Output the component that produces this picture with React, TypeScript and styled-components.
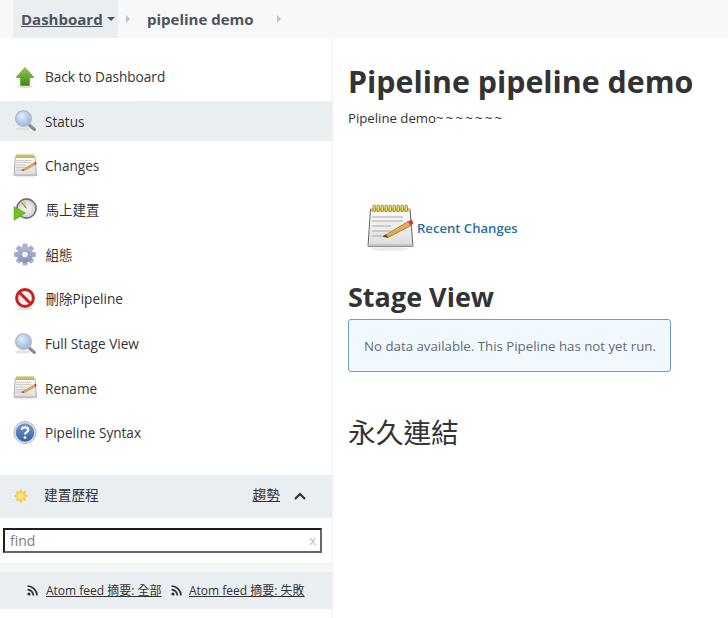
import React, { useId } from "react";
import styled, { createGlobalStyle } from "styled-components";

const Global = createGlobalStyle`
  html, body { margin: 0; padding: 0; height: 100%; overflow: hidden; background: #fff; }
  body { font-family: "Open Sans", "Noto Sans CJK TC", sans-serif; color: #333; }
  #root { height: 100%; }
`;

const Page = styled.div`
  display: flex;
  flex-direction: column;
  height: 618px;
`;
const Breadcrumbs = styled.nav`
  display: flex;
  align-items: center;
  height: 38px;
  flex: none;
  padding-left: 13px;
  background: #f8f8f8;
  font-size: 15px;
  font-weight: 700;
  color: #4d545d;
`;
const CrumbActive = styled.div`
  display: flex;
  align-items: center;
  width: 105px;
  height: 38px;
  padding-left: 8px;
  box-sizing: border-box;
  background: #e9eef1;
`;
const CrumbLink = styled.a`
  color: #4d545d;
  text-decoration: underline;
`;
const Caret = styled.span`
  width: 0;
  height: 0;
  margin-left: 4px;
  margin-bottom: 1px;
  border-left: 4.5px solid transparent;
  border-right: 4.5px solid transparent;
  border-top: 4.5px solid #4d545d;
`;
const Chevron = styled.span<{ $gap: number }>`
  width: 0;
  height: 0;
  margin-left: ${(p) => p.$gap}px;
  border-top: 4px solid transparent;
  border-bottom: 4px solid transparent;
  border-left: 4px solid #c4c4c4;
`;
const CrumbText = styled.span`
  margin-left: 17px;
`;
const Body = styled.div`
  display: flex;
  flex: 1;
  min-height: 0;
`;
const Side = styled.aside`
  flex: none;
  box-sizing: border-box;
  border-right: 1px solid #f0f0f0;
  padding-top: 18.7px;
  width: 333px;
`;
const TaskList = styled.div`
  display: flex;
  flex-direction: column;
  gap: 4.5px;
`;
const Task = styled.a<{ $active?: boolean }>`
  display: flex;
  align-items: center;
  height: 40px;
  padding-left: 13px;
  font-size: 13.6px;
  font-weight: 500;
  color: #333;
  background: ${(p) => (p.$active ? "#e9eef1" : "transparent")};
`;
const TaskIcon = styled.span`
  display: flex;
  width: 24px;
  height: 24px;
  margin-right: 8px;
  flex: none;
`;
const Cjk = styled.span`
  display: inline-block;
  font-size: 13.5px;
  font-weight: 400;
  margin-left: 0.5px;
  padding-bottom: 2px;
`;
const HistoryHead = styled.div`
  display: flex;
  align-items: center;
  height: 43px;
  margin-top: 22.3px;
  padding-left: 13px;
  background: #e9eef1;
  font-size: 13.7px;
`;
const HistoryTitle = styled.span`
  margin-left: 15px;
  padding-bottom: 5px;
  flex: 1;
  color: #333;
`;
const Trend = styled.a`
  color: #333;
  text-decoration: underline;
  padding-bottom: 5px;
  margin-right: 14px;
`;
const Collapse = styled.span`
  display: flex;
  margin-right: 26px;
`;
const SearchWrap = styled.div`
  position: relative;
  padding: 10px 10px 10px 3px;
`;
const Search = styled.input`
  display: block;
  width: 319px;
  height: 25px;
  box-sizing: border-box;
  padding: 0 20px 0 5px;
  border: 2px solid;
  border-color: #1f1f1f #666 #666 #1f1f1f;
  font: 14px "Open Sans", sans-serif;
  color: #888;
  outline: none;
  &::placeholder { color: #7a7f85; opacity: 1; }
`;
const Clear = styled.span`
  position: absolute;
  right: 16px;
  top: 13px;
  font-size: 13px;
  color: #bbb;
`;
const FeedGap = styled.div`
  height: 8px;
  background: #f7f7f7;
  border-top: 1px solid #eee;
`;
const FeedBar = styled.div`
  display: flex;
  align-items: center;
  justify-content: center;
  height: 37px;
  background: #e9eef1;
  font-size: 12px;
  gap: 9px;
`;
const Feed = styled.a`
  display: flex;
  align-items: center;
  color: #333;
  span { text-decoration: underline; margin-left: 7.5px; }
`;
const Main = styled.main`
  flex: 1;
  padding-left: 15px;
  min-width: 0;
`;
const Title = styled.h1`
  margin: 24px 0 0;
  font-size: 30.35px;
  line-height: 40px;
  font-weight: 700;
  color: #333;
  white-space: nowrap;
`;
const Desc = styled.p`
  margin: 7px 0 0;
  font-size: 13.2px;
  line-height: 18px;
  color: #333;
`;
const Tildes = styled.span`
  letter-spacing: 2.2px;
`;
const Recent = styled.div`
  display: flex;
  align-items: center;
  margin: 77px 0 0 18px;
  height: 48px;
`;
const RecentLink = styled.a`
  margin-left: 3px;
  font-size: 13.1px;
  font-weight: 600;
  color: #2a6da5;
`;
const H2 = styled.h2`
  margin: 28px 0 0;
  font-size: 27px;
  line-height: 34px;
  font-weight: 700;
  color: #333;
`;
const Alert = styled.div`
  display: flex;
  align-items: center;
  box-sizing: border-box;
  width: 323px;
  height: 53px;
  margin-top: 5px;
  padding-left: 15px;
  border: 1px solid #6e9ccf;
  border-radius: 3px;
  background: #f1f9ff;
  font-size: 13.27px;
  color: #5f6b73;
  white-space: nowrap;
`;
const Permalinks = styled.h2`
  margin: 40px 0 0;
  font-size: 27.7px;
  line-height: 38px;
  font-weight: 400;
  color: #333;
  font-family: "Noto Sans CJK TC", sans-serif;
`;

const Up = () => {
  const id = useId();
  return (
    <svg width="24" height="24" viewBox="0 0 24 24">
      <defs>
        <linearGradient id={id} x1="0" y1="0" x2="0" y2="1">
          <stop offset="0" stopColor="#8fcb4a" />
          <stop offset="1" stopColor="#3f8a12" />
        </linearGradient>
      </defs>
      <ellipse cx="12" cy="21.5" rx="8" ry="1.5" fill="#ddd" />
      <path d="M12 2.5 21 12.5H16.5V20.5H7.5V12.5H3Z" fill={`url(#${id})`} stroke="#4e9a1a" strokeWidth=".6" />
    </svg>
  );
};
const Lens = () => {
  const id = useId();
  return (
    <svg width="24" height="24" viewBox="0 0 24 24">
      <defs>
        <radialGradient id={id} cx=".4" cy=".35" r=".7">
          <stop offset="0" stopColor="#e4effa" />
          <stop offset="1" stopColor="#8db4e2" />
        </radialGradient>
      </defs>
      <ellipse cx="10" cy="20" rx="8" ry="1.6" fill="#e2e2e2" />
      <path d="M15 15 21.5 20.5" stroke="#8a8a8a" strokeWidth="3" strokeLinecap="round" />
      <circle cx="10.5" cy="9.5" r="7.8" fill={`url(#${id})`} stroke="#b4bcc6" strokeWidth="1.6" />
    </svg>
  );
};
const Notepad = ({ size = 24 }: { size?: number }) => {
  const id = useId();
  return (
    <svg width={size} height={size} viewBox="0 0 48 48">
      <defs>
        <linearGradient id={id} x1="0" y1="0" x2="0" y2="1">
          <stop offset="0" stopColor="#fdfdfd" />
          <stop offset="1" stopColor="#dcdcdc" />
        </linearGradient>
      </defs>
      <ellipse cx="24" cy="45" rx="19" ry="2" fill="#ececec" />
      <path d="M4.5 5H44L47 42.5H2Z" fill={`url(#${id})`} stroke="#666" strokeWidth="1" strokeLinejoin="round" />
      <path d="M2.5 40H46.5V42.5H2.5Z" fill="#c4c4c4" />
      <rect x="5" y="4" width="38.5" height="4" fill="#e2d27a" />
      {[7, 11, 15, 19, 23, 27, 31, 35, 39].map((x) => (
        <rect key={x} x={x} y="1" width="2.4" height="6.5" rx="1.2" fill="#f5e27a" stroke="#7a6a10" strokeWidth=".7" />
      ))}
      {[13, 17, 22, 27, 32].map((y, i) => (
        <path key={y} d={`M6 ${y}H${[37, 37, 25, 25, 18][i]}`} stroke="#a8a8a8" strokeWidth="1" />
      ))}
      <path d="M17 32.5 42 17.5 45 21.5 22 33.5Z" fill="#e2ad4a" stroke="#8a5a14" strokeWidth=".6" />
      <path d="M17 32.5 22 33.5 20 30.5Z" fill="#503818" />
      <path d="M42 17.5 45.5 15.5 47.5 19 45 21.5Z" fill="#e33030" />
    </svg>
  );
};
const Clock = () => {
  const id = useId();
  return (
    <svg width="24" height="24" viewBox="0 0 24 24">
      <defs>
        <radialGradient id={id} cx=".5" cy=".5" r=".6">
          <stop offset="0" stopColor="#f8f8f6" />
          <stop offset="1" stopColor="#c8c8c8" />
        </radialGradient>
      </defs>
      <circle cx="13.5" cy="10.5" r="9.6" fill={`url(#${id})`} stroke="#6e6a8c" strokeWidth="1.6" />
      <path d="M13.5 10.5 7.5 4 12 1.8Z" fill="#e8cf6e" />
      <path d="M13.5 10.5 8.5 4.5" stroke="#444" strokeWidth=".7" />
      <path d="M1 8.5 12.5 15 1 22.5Z" fill="#6cc21c" stroke="#4f9a10" strokeWidth=".5" />
    </svg>
  );
};
const Gear = () => {
  const id = useId();
  const teeth = [0, 45, 90, 135, 180, 225, 270, 315];
  return (
    <svg width="24" height="24" viewBox="0 0 24 24">
      <defs>
        <linearGradient id={id} x1="0" y1="0" x2="0" y2="1">
          <stop offset="0" stopColor="#b4b8d8" />
          <stop offset="1" stopColor="#8c90b8" />
        </linearGradient>
      </defs>
      {teeth.map((a) => (
        <rect key={a} x="9.5" y="0.5" width="5" height="6" rx="1" fill={`url(#${id})`} transform={`rotate(${a} 12 11.5)`} />
      ))}
      <circle cx="12" cy="11.5" r="8" fill={`url(#${id})`} />
      <circle cx="12" cy="11.5" r="3.4" fill="#f4f4f8" stroke="#70749c" strokeWidth=".6" />
    </svg>
  );
};
const Stop = () => (
  <svg width="24" height="24" viewBox="0 0 24 24">
    <ellipse cx="12" cy="21.8" rx="8" ry="1.4" fill="#e0e0e0" />
    <circle cx="12" cy="11" r="8.4" fill="#f6f0f0" stroke="#cc1f1f" strokeWidth="3" />
    <path d="M6.2 5.2 17.8 16.8" stroke="#cc1f1f" strokeWidth="3" />
  </svg>
);
const Help = () => {
  const id = useId();
  return (
    <svg width="24" height="24" viewBox="0 0 24 24">
      <defs>
        <linearGradient id={id} x1="0" y1="0" x2="0" y2="1">
          <stop offset="0" stopColor="#7d9fd0" />
          <stop offset="1" stopColor="#2f5ea0" />
        </linearGradient>
      </defs>
      <circle cx="12" cy="11.5" r="10" fill={`url(#${id})`} stroke="#dbe4f0" strokeWidth="1.4" />
      <circle cx="12" cy="11.5" r="11" fill="none" stroke="#8ea6c8" strokeWidth=".8" />
      <path d="M8.7 8.8C9 5.6 15.3 5.6 15.3 9 15.3 11.3 12 11 12 13.6" fill="none" stroke="#fff" strokeWidth="2.2" />
      <circle cx="12" cy="16.6" r="1.4" fill="#fff" />
    </svg>
  );
};
const Sun = () => {
  const id = useId();
  const rays = [0, 45, 90, 135, 180, 225, 270, 315];
  return (
    <svg width="16" height="16" viewBox="0 0 16 16">
      <defs>
        <radialGradient id={id}>
          <stop offset="0" stopColor="#fff8a0" />
          <stop offset="1" stopColor="#f6c92c" />
        </radialGradient>
      </defs>
      {rays.map((a) => (
        <path key={a} d="M6.8 3.4 8 .6 9.2 3.4Z" fill="#f4b45a" transform={`rotate(${a} 8 8)`} />
      ))}
      <circle cx="8" cy="8" r="4.8" fill={`url(#${id})`} />
    </svg>
  );
};
const Rss = () => (
  <svg width="11" height="11" viewBox="0 0 11 11">
    <circle cx="2" cy="9" r="1.6" fill="#333" />
    <path d="M.5 4.6A6 6 0 0 1 6.4 10.5M.5 1A9.6 9.6 0 0 1 10 10.5" fill="none" stroke="#333" strokeWidth="1.7" />
  </svg>
);
const ChevronUp = () => (
  <svg width="12" height="8" viewBox="0 0 12 8">
    <path d="M1 7 6 2 11 7" fill="none" stroke="#333" strokeWidth="2.2" />
  </svg>
);

const tasks: { label: React.ReactNode; key: string; icon: React.ReactNode; active?: boolean }[] = [
  { key: "back", label: "Back to Dashboard", icon: <Up /> },
  { key: "status", label: "Status", icon: <Lens />, active: true },
  { key: "changes", label: "Changes", icon: <Notepad /> },
  { key: "build", label: <Cjk>馬上建置</Cjk>, icon: <Clock /> },
  { key: "config", label: <Cjk>組態</Cjk>, icon: <Gear /> },
  { key: "delete", label: <><Cjk>刪除</Cjk>Pipeline</>, icon: <Stop /> },
  { key: "full", label: "Full Stage View", icon: <Lens /> },
  { key: "rename", label: "Rename", icon: <Notepad /> },
  { key: "syntax", label: "Pipeline Syntax", icon: <Help /> },
];

export default function App() {
  return (
    <Page>
      <Global />
      <Breadcrumbs>
        <CrumbActive>
          <CrumbLink>Dashboard</CrumbLink>
          <Caret />
        </CrumbActive>
        <Chevron $gap={8} />
        <CrumbText>pipeline demo</CrumbText>
        <Chevron $gap={23} />
      </Breadcrumbs>
      <Body>
        <Side>
          <TaskList>
            {tasks.map((t) => (
              <Task key={t.key} $active={t.active}>
                <TaskIcon>{t.icon}</TaskIcon>
                <span>{t.label}</span>
              </Task>
            ))}
          </TaskList>
          <HistoryHead>
            <Sun />
            <HistoryTitle>建置歷程</HistoryTitle>
            <Trend>趨勢</Trend>
            <Collapse><ChevronUp /></Collapse>
          </HistoryHead>
          <SearchWrap>
            <Search placeholder="find" />
            <Clear>x</Clear>
          </SearchWrap>
          <FeedGap />
          <FeedBar>
            <Feed><Rss /><span>Atom feed 摘要: 全部</span></Feed>
            <Feed><Rss /><span>Atom feed 摘要: 失敗</span></Feed>
          </FeedBar>
        </Side>
        <Main>
          <Title>Pipeline pipeline demo</Title>
          <Desc>Pipeline demo<Tildes>~~~~~~~</Tildes></Desc>
          <Recent>
            <Notepad size={48} />
            <RecentLink>Recent Changes</RecentLink>
          </Recent>
          <H2>Stage View</H2>
          <Alert>No data available. This Pipeline has not yet run.</Alert>
          <Permalinks>永久連結</Permalinks>
        </Main>
      </Body>
    </Page>
  );
}
